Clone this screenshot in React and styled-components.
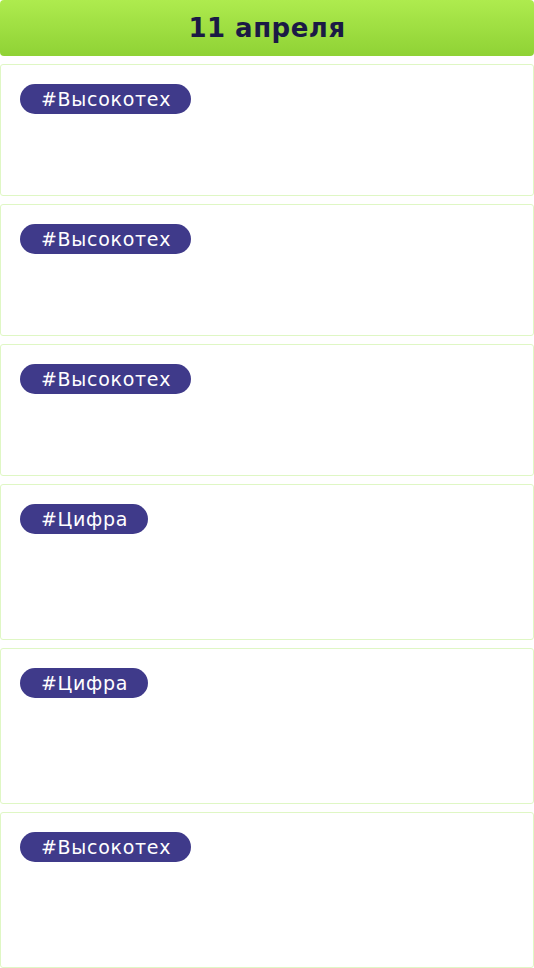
import React from "react";
import styled, { createGlobalStyle } from "styled-components";

const GlobalStyle = createGlobalStyle`
  body {
    margin: 0;
    background: #ffffff;
    font-family: "DejaVu Sans", "Noto Sans", sans-serif;
  }
`;

const Page = styled.div`
  display: flex;
  flex-direction: column;
  gap: 8px;
  width: 534px;
`;

const DayHeader = styled.div`
  height: 56px;
  border-radius: 4px;
  background: linear-gradient(180deg, #aeeb4e 0%, #8fd235 100%);
  display: flex;
  align-items: center;
  justify-content: center;
  color: #1b1a45;
  font-size: 26px;
  font-weight: 700;
  letter-spacing: 0.5px;
`;

const Card = styled.div`
  box-sizing: border-box;
  height: ${props => props.tall ? "156px" : "132px"};
  border: 1px solid #dff7c4;
  border-radius: 3px;
  padding: 19px 19px;
  display: flex;
  align-items: flex-start;
`;

const Tag = styled.span`
  display: inline-flex;
  align-items: center;
  height: 30px;
  padding: 0 20px 0 21px;
  border-radius: 15px;
  background: #3f3a8a;
  color: #ffffff;
  font-size: 19px;
  font-weight: 400;
  letter-spacing: 0.7px;
`;

const events = [
  { tag: "#Высокотех" },
  { tag: "#Высокотех" },
  { tag: "#Высокотех" },
  { tag: "#Цифра", tall: true },
  { tag: "#Цифра", tall: true },
  { tag: "#Высокотех", tall: true },
];

export default function App() {
  return (
    <>
      <GlobalStyle />
      <Page>
        <DayHeader>11 апреля</DayHeader>
        {events.map((ev, i) => (
          <Card key={i} tall={ev.tall}>
            <Tag>{ev.tag}</Tag>
          </Card>
        ))}
      </Page>
    </>
  );
}
